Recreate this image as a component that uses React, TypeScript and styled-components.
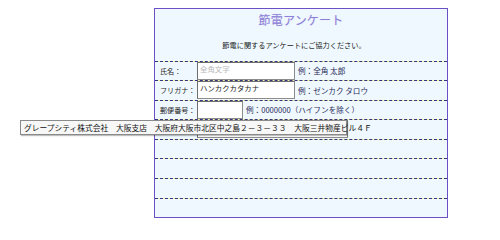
import React from "react"
import styled, { createGlobalStyle } from "styled-components"

const GlobalStyle = createGlobalStyle`
  html, body {
    margin: 0;
    padding: 0;
    background: #ffffff;
    font-family: "Noto Sans CJK JP", "Noto Sans", sans-serif;
  }
  * {
    box-sizing: border-box;
  }
`

interface Field {
  label: string
  value?: string
  placeholder?: string
  example?: string
  inputWidth?: number
}

const fields: Field[] = [
  { label: "氏名：", placeholder: "全角文字", example: "例：全角 太郎", inputWidth: 98 },
  { label: "フリガナ：", value: "ハンカクカタカナ", example: "例：ゼンカク タロウ", inputWidth: 98 },
  { label: "郵便番号：", example: "例：0000000（ハイフンを除く）", inputWidth: 46 },
  { label: "", inputWidth: 151 },
  { label: "" },
  { label: "" },
  { label: "" },
  { label: "" },
]

const App = () => {
  return (
    <>
      <GlobalStyle />
      <Page>
        <Panel>
          <Header>
            <Title>節電アンケート</Title>
            <Lead>節電に関するアンケートにご協力ください。</Lead>
          </Header>
          {fields.map((field, index) => (
            <Row key={index}>
              <Label>{field.label}</Label>
              {field.inputWidth ? (
                <Input $width={field.inputWidth} $placeholder={!field.value && !!field.placeholder}>
                  {field.value || field.placeholder}
                </Input>
              ) : null}
              {field.example ? <Example>{field.example}</Example> : null}
            </Row>
          ))}
        </Panel>
        <Tooltip>グレープシティ株式会社　大阪支店　大阪府大阪市北区中之島２－３－３３　大阪三井物産ビル４Ｆ</Tooltip>
      </Page>
    </>
  )
}

export default App

const Page = styled.div`
  position: relative;
  width: 500px;
  height: 238px;
  padding: 8px 0 0 154px;
  overflow: hidden;
`

const Panel = styled.div`
  width: 294px;
  border: 1.5px solid #6a4fc6;
  background: #eef8fe;
  display: flex;
  flex-direction: column;
`

const Header = styled.div`
  height: 51.5px;
  display: flex;
  flex-direction: column;
  align-items: center;
  padding-top: 3px;
`

const Title = styled.div`
  font-size: 12px;
  line-height: 16px;
  letter-spacing: 0.2px;
  color: #8c80d6;
  text-shadow: 0 0 1px #d8d2f4;
`

const Lead = styled.div`
  margin-top: 11.5px;
  padding-right: 14px;
  font-size: 7.2px;
  line-height: 10px;
  color: #1a1a1a;
`

const Row = styled.div`
  height: 19.6px;
  display: flex;
  align-items: stretch;
  border-top: 1px dashed #34347e;
  background: linear-gradient(#f6f6a8, #f6f6a8) top / 100% 1px no-repeat, #eef8fe;
  background-origin: border-box;
`

const Label = styled.div`
  width: 42px;
  padding-left: 5px;
  display: flex;
  align-items: center;
  font-size: 7.1px;
  color: #1e1e1e;
  white-space: nowrap;
  overflow: hidden;
`

const Input = styled.div<{ $width: number; $placeholder: boolean }>`
  width: ${p => p.$width}px;
  margin-bottom: 0.6px;
  background: #ffffff;
  border: 1px solid #8c8c8c;
  border-top-color: #6e6e6e;
  border-left-color: #6e6e6e;
  padding: 1px 2px;
  font-size: 7.4px;
  line-height: 9px;
  color: ${p => (p.$placeholder ? "#b8b8b8" : "#1a1a1a")};
  white-space: nowrap;
  overflow: hidden;
`

const Example = styled.div`
  padding-left: 3px;
  display: flex;
  align-items: center;
  font-size: 7.6px;
  color: #2a2a58;
  white-space: nowrap;
`

const Tooltip = styled.div`
  position: absolute;
  left: 20px;
  top: 120px;
  width: 327px;
  height: 15px;
  padding: 0 3px;
  display: flex;
  align-items: center;
  background: #f7f7f7;
  border: 1px solid #8a8a8a;
  box-shadow: 1px 1px 1px rgba(0, 0, 0, 0.25);
  font-size: 7.75px;
  color: #111111;
  white-space: nowrap;
`
